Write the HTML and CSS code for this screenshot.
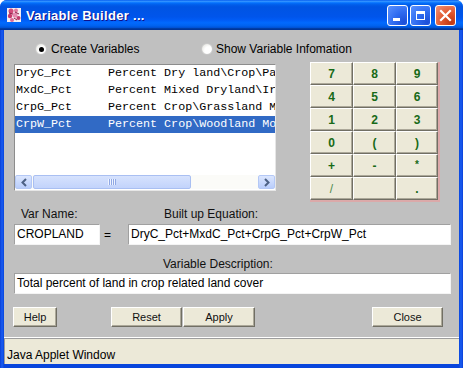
FILE: index.html
```html
<!DOCTYPE html>
<html>
<head>
<meta charset="utf-8">
<title>Variable Builder</title>
<link rel="stylesheet" href="styles.css">
</head>
<body>
<div class="window">
  <div class="titlebar">
    <svg class="app-icon" width="16" height="16" viewBox="0 0 16 16">
      <rect x="1" y="1" width="14" height="14" fill="#f6eef2"/>
      <circle cx="5" cy="4" r="2.5" fill="#d24a7a"/>
      <circle cx="10" cy="3.5" r="2" fill="#e07aa0"/>
      <circle cx="4" cy="9" r="2.2" fill="#c8386a"/>
      <circle cx="9" cy="8" r="2.6" fill="#e58ab0"/>
      <circle cx="12.5" cy="11" r="2" fill="#c23c6c"/>
      <circle cx="6" cy="13" r="2" fill="#dc6a96"/>
      <path d="M3 6 L7 7 M8 11 L11 13 M9 5 L13 7" stroke="#8a1c44" stroke-width="1"/>
    </svg>
    <span class="title">Variable Builder ...</span>
    <div class="controls">
      <span class="tb tb-min"><span class="min-bar"></span></span>
      <span class="tb tb-max"><span class="max-box"></span></span>
      <span class="tb tb-close">
        <svg width="13" height="13" viewBox="0 0 13 13"><path d="M2 2 L11 11 M11 2 L2 11" stroke="#fff" stroke-width="2.2" stroke-linecap="square"/></svg>
      </span>
    </div>
  </div>
  <div class="client">
    <div class="panel">
      <div class="radios">
        <label class="radio r1"><span class="dot checked"></span>Create Variables</label>
        <label class="radio r2"><span class="dot"></span>Show Variable Infomation</label>
      </div>
      <div class="main">
        <div class="list">
          <div class="rows">
            <div class="row"><span class="c1">DryC_Pct</span><span class="c2">Percent Dry land\Crop\Pa</span></div>
            <div class="row"><span class="c1">MxdC_Pct</span><span class="c2">Percent Mixed Dryland\Ir</span></div>
            <div class="row"><span class="c1">CrpG_Pct</span><span class="c2">Percent Crop\Grassland M</span></div>
            <div class="row sel"><span class="c1">CrpW_Pct</span><span class="c2">Percent Crop\Woodland Mo</span></div>
          </div>
          <div class="hscroll">
            <span class="sb-btn"><svg width="8" height="9" viewBox="0 0 8 9"><path d="M6 1 L2.5 4.5 L6 8" fill="none" stroke="#4d6185" stroke-width="2"/></svg></span>
            <span class="sb-thumb"><span class="grip"></span></span>
            <span class="sb-track"></span>
            <span class="sb-btn"><svg width="8" height="9" viewBox="0 0 8 9"><path d="M2 1 L5.5 4.5 L2 8" fill="none" stroke="#4d6185" stroke-width="2"/></svg></span>
          </div>
        </div>
        <div class="keypad">
          <span class="key">7</span><span class="key">8</span><span class="key">9</span>
          <span class="key">4</span><span class="key">5</span><span class="key">6</span>
          <span class="key">1</span><span class="key">2</span><span class="key">3</span>
          <span class="key">0</span><span class="key">(</span><span class="key">)</span>
          <span class="key">+</span><span class="key">-</span><span class="key key-star">*</span>
          <span class="key key-thin">/</span><span class="key"></span><span class="key key-dot">.</span>
        </div>
      </div>
      <div class="labels">
        <span class="lbl-name">Var Name:</span>
        <span class="lbl-eq">Built up Equation:</span>
      </div>
      <div class="fields">
        <div class="field">CROPLAND</div>
        <span class="eq">=</span>
        <div class="field">DryC_Pct+MxdC_Pct+CrpG_Pct+CrpW_Pct</div>
      </div>
      <div class="desc-label">Variable Description:</div>
      <div class="field desc">Total percent of land in crop related land cover</div>
      <div class="buttons">
        <span class="btn btn-help">Help</span>
        <span class="btn btn-reset">Reset</span>
        <span class="btn btn-apply">Apply</span>
        <span class="btn btn-close">Close</span>
      </div>
    </div>
    <div class="status"><div class="status-inner">Java Applet Window</div></div>
  </div>
</div>
</body>
</html>
```
FILE: styles.css
```css
html, body {
  margin: 0;
  padding: 0;
  background: #ffffff;
}
body {
  width: 463px;
  height: 368px;
  overflow: hidden;
  font-family: "Liberation Sans", Arial, sans-serif;
  font-size: 12px;
  color: #000;
}
.window {
  width: 463px;
  height: 368px;
  display: flex;
  flex-direction: column;
  background: linear-gradient(to right, #0a3fd6 0, #1a5df2 2px, #0845dc 4px, #0845dc 459px, #1a5df2 461px, #0a3fd6 463px);
  border-radius: 7px 7px 0 0;
  overflow: hidden;
}
.titlebar {
  height: 30px;
  flex: none;
  display: flex;
  align-items: center;
  padding: 0 7px 0 6px;
  background: linear-gradient(to bottom, #0058ee 0%, #3593ff 4%, #288eff 6%, #127dff 8%, #036ffc 10%, #0262ee 14%, #0057e5 20%, #0054e3 24%, #0055eb 56%, #005bf5 66%, #026afe 76%, #0062ef 86%, #0052d6 92%, #0040ab 94%, #003092 100%);
}
.app-icon {
  flex: none;
  margin-right: 4px;
}
.title {
  color: #fff;
  font-weight: bold;
  font-size: 13px;
  letter-spacing: 0.3px;
  text-shadow: 1px 1px 0 #0f1089;
  flex: 1;
}
.controls {
  display: flex;
  gap: 2px;
  margin-top: 1px;
}
.tb {
  width: 21px;
  height: 21px;
  box-sizing: border-box;
  border: 1px solid #fff;
  border-radius: 3px;
  background: radial-gradient(circle at 85% 85%, #1c4fd8 0%, #2f6bf0 45%, #5b92ff 100%);
  position: relative;
  display: flex;
  align-items: center;
  justify-content: center;
}
.tb-close {
  margin-left: 2px;
  background: radial-gradient(circle at 80% 85%, #c03812 0%, #e2582f 45%, #f0947a 100%);
}
.min-bar {
  position: absolute;
  left: 5px;
  bottom: 4px;
  width: 7px;
  height: 3px;
  background: #fff;
}
.max-box {
  width: 9px;
  height: 9px;
  box-sizing: border-box;
  border: 1px solid #fff;
  border-top-width: 3px;
}
.client {
  flex: 1;
  margin: 0 4px 4px;
  display: flex;
  flex-direction: column;
}
.panel {
  height: 307px;
  flex: none;
  box-sizing: border-box;
  background: #c0c0c0;
  padding: 12px 8px 0 10px;
}
.radios {
  height: 14px;
  display: flex;
  align-items: center;
}
.radio {
  display: flex;
  align-items: center;
  font-size: 12px;
  line-height: 14px;
  color: #000;
}
.r1 {
  margin-left: 21px;
  width: 166px;
}
.dot {
  width: 12px;
  height: 12px;
  box-sizing: border-box;
  border-radius: 50%;
  background: radial-gradient(circle at 65% 65%, #ffffff 40%, #dcdcd6 100%);
  border: 1px solid #c8c8c8;
  margin-right: 4px;
  position: relative;
}
.r2 .dot {
  margin-right: 3px;
}
.dot.checked::after {
  content: "";
  position: absolute;
  left: 2.5px;
  top: 2.5px;
  width: 5px;
  height: 5px;
  border-radius: 50%;
  background: #000;
}
.main {
  margin-top: 6px;
  height: 139px;
  display: flex;
  align-items: flex-start;
}
.list {
  margin-top: 2px;
  width: 262px;
  height: 127px;
  box-sizing: border-box;
  background: #fff;
  border-top: 1px solid #8c8c8c;
  border-left: 1px solid #8c8c8c;
  border-right: 1px solid #e6e6e6;
  border-bottom: 1px solid #e6e6e6;
  display: flex;
  flex-direction: column;
  overflow: hidden;
}
.rows {
  flex: 1;
}
.row {
  height: 17px;
  line-height: 17px;
  white-space: nowrap;
  overflow: hidden;
  font-family: "Liberation Mono", "Courier New", monospace;
  font-size: 11.7px;
  color: #000;
  padding-left: 1px;
}
.row.sel {
  background: #316ac5;
  color: #fff;
}
.c1 {
  display: inline-block;
  width: 92px;
}
.hscroll {
  height: 14px;
  margin: 0 0 1px 0;
  display: flex;
  align-items: stretch;
  background: #fbfbf8;
}
.sb-btn {
  width: 17px;
  box-sizing: border-box;
  border: 1px solid #b4c8f6;
  border-radius: 2px;
  background: linear-gradient(to bottom, #dbe6fe, #b9cdfb);
  display: flex;
  align-items: center;
  justify-content: center;
}
.sb-thumb {
  width: 158px;
  box-sizing: border-box;
  margin-left: 1px;
  border: 1px solid #a9bff2;
  border-radius: 2px;
  background: linear-gradient(to bottom, #d6e2fd, #c2d3fb);
  display: flex;
  align-items: center;
  justify-content: center;
}
.grip {
  width: 8px;
  height: 6px;
  background: repeating-linear-gradient(to right, #eef3ff 0, #eef3ff 1px, #8fa8e4 1px, #8fa8e4 2px);
}
.sb-track {
  flex: 1;
}
.keypad {
  margin-left: 34px;
  display: grid;
  grid-template-columns: 43px 43px 42px;
  grid-template-rows: repeat(6, 23px);
  border-right: 2px solid #dba9a9;
  border-bottom: 2px solid #dba9a9;
}
.key {
  box-sizing: border-box;
  background: #ece9d8;
  border: 1px solid;
  border-color: #ffffff #716f64 #716f64 #ffffff;
  box-shadow: inset -1px -1px 0 #aca899;
  display: flex;
  align-items: center;
  justify-content: center;
  font-weight: bold;
  font-size: 12px;
  line-height: 14px;
  color: #176a17;
}
.key-star {
  align-items: flex-start;
  padding-top: 3px;
  font-size: 10px;
}
.key-thin {
  font-weight: normal;
  color: #4d8a4d;
}
.key-dot {
  align-items: flex-end;
  padding-bottom: 3px;
}
.labels {
  margin-top: 6px;
  height: 14px;
  line-height: 14px;
  display: flex;
  color: #111;
}
.lbl-name {
  padding-left: 7px;
  width: 143px;
}
.fields {
  margin-top: 3px;
  display: grid;
  grid-template-columns: 86px 28px 323px;
  height: 21px;
}
.field {
  height: 21px;
  box-sizing: border-box;
  background: #fff;
  border: 1px solid;
  border-color: #a0a0a0 #f4f4f4 #f4f4f4 #a0a0a0;
  padding-left: 2px;
  line-height: 19px;
  white-space: nowrap;
  overflow: hidden;
  color: #000;
}
.eq {
  padding-left: 4px;
  line-height: 23px;
}
.desc-label {
  margin-top: 12px;
  height: 14px;
  line-height: 14px;
  padding-left: 149px;
  color: #111;
}
.desc {
  margin-top: 2px;
  width: 437px;
}
.buttons {
  margin-top: 13px;
  display: flex;
  height: 20px;
  margin-left: -1px;
}
.btn {
  box-sizing: border-box;
  height: 20px;
  background: #ece9d8;
  border: 1px solid;
  border-color: #ffffff #716f64 #716f64 #ffffff;
  box-shadow: inset -1px -1px 0 #aca899;
  display: flex;
  align-items: center;
  justify-content: center;
  font-size: 11px;
  color: #111;
}
.btn-help { width: 44px; }
.btn-reset { width: 71px; margin-left: 54px; }
.btn-apply { width: 72px; margin-left: 1px; }
.btn-close { width: 71px; margin-left: 117px; }
.status {
  flex: 1;
  background: #ece9d8;
  border-top: 1px solid #ffffff;
}
.status-inner {
  height: 100%;
  box-sizing: border-box;
  border-top: 1px solid #9d9d9d;
  border-left: 1px solid #9d9d9d;
  padding: 8px 0 0 2px;
  font-size: 12px;
  line-height: 16px;
  color: #000;
}
```
